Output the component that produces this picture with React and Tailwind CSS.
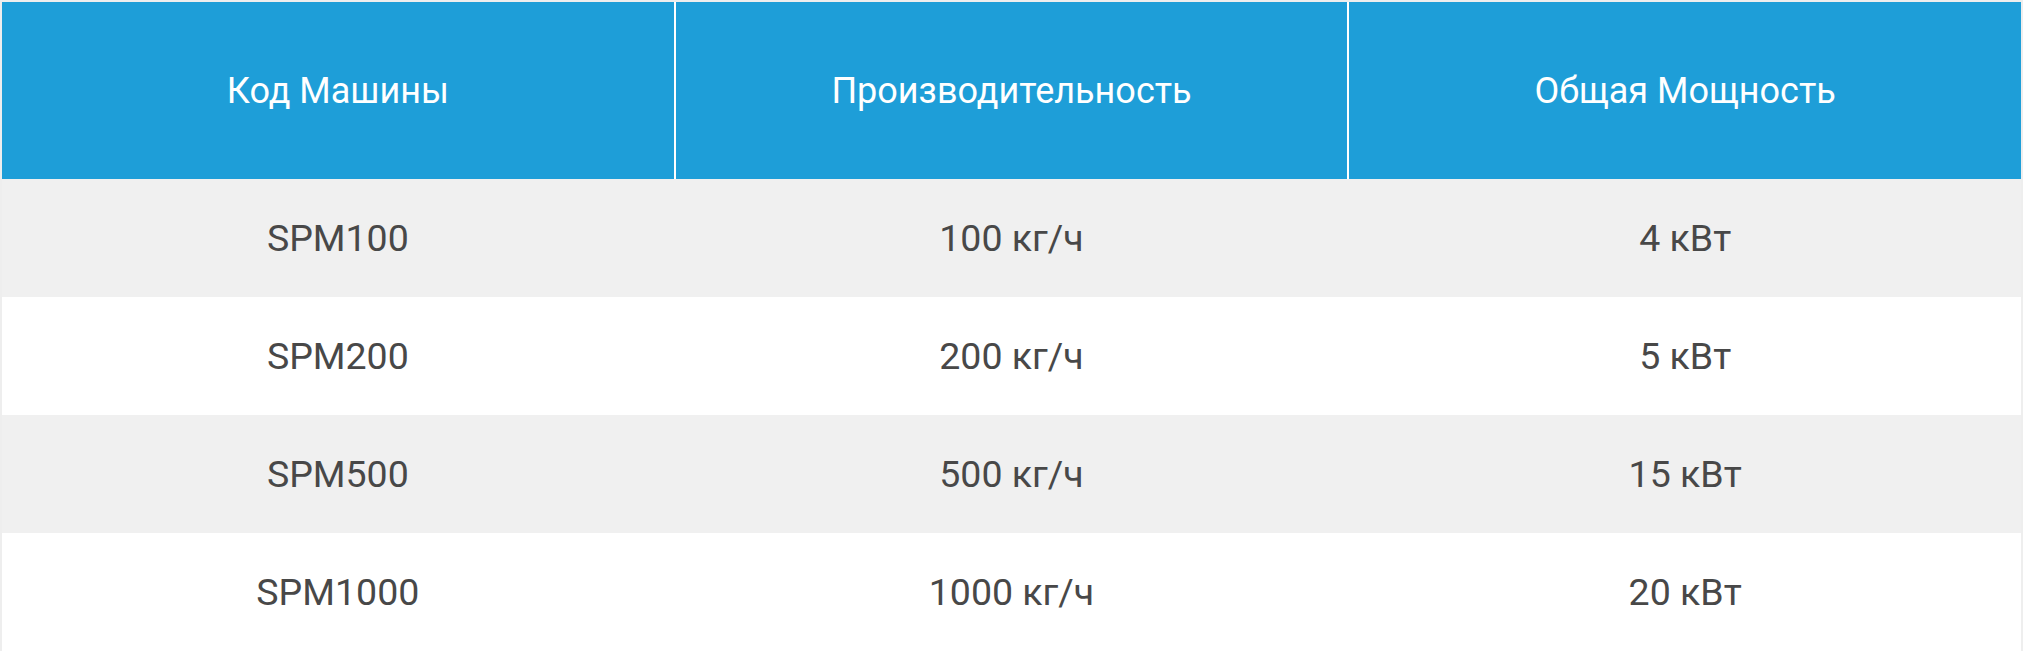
import React from "react";

const rows = [
  ["SPM100", "100 кг/ч", "4 кВт"],
  ["SPM200", "200 кг/ч", "5 кВт"],
  ["SPM500", "500 кг/ч", "15 кВт"],
  ["SPM1000", "1000 кг/ч", "20 кВт"],
];

export default function App() {
  return (
    <div className="w-[2023px] bg-white border-2 border-[#eeeeee] font-['Roboto',sans-serif]">
      <div className="grid grid-cols-3 gap-[2px] bg-white h-[177px]">
        {["Код Машины", "Производительность", "Общая Мощность"].map((h) => (
          <div key={h} className="bg-[#1e9ed8] flex items-center justify-center text-white text-[36px] font-normal">
            {h}
          </div>
        ))}
      </div>
      {rows.map((r, i) => (
        <div
          key={i}
          className={`grid grid-cols-3 gap-[2px] h-[118px] ${i % 2 === 0 ? "bg-[#f0f0f0]" : "bg-white"}`}
        >
          {r.map((c, j) => (
            <div key={j} className="flex items-center justify-center text-[#484848] text-[37.5px]">
              {c}
            </div>
          ))}
        </div>
      ))}
    </div>
  );
}
